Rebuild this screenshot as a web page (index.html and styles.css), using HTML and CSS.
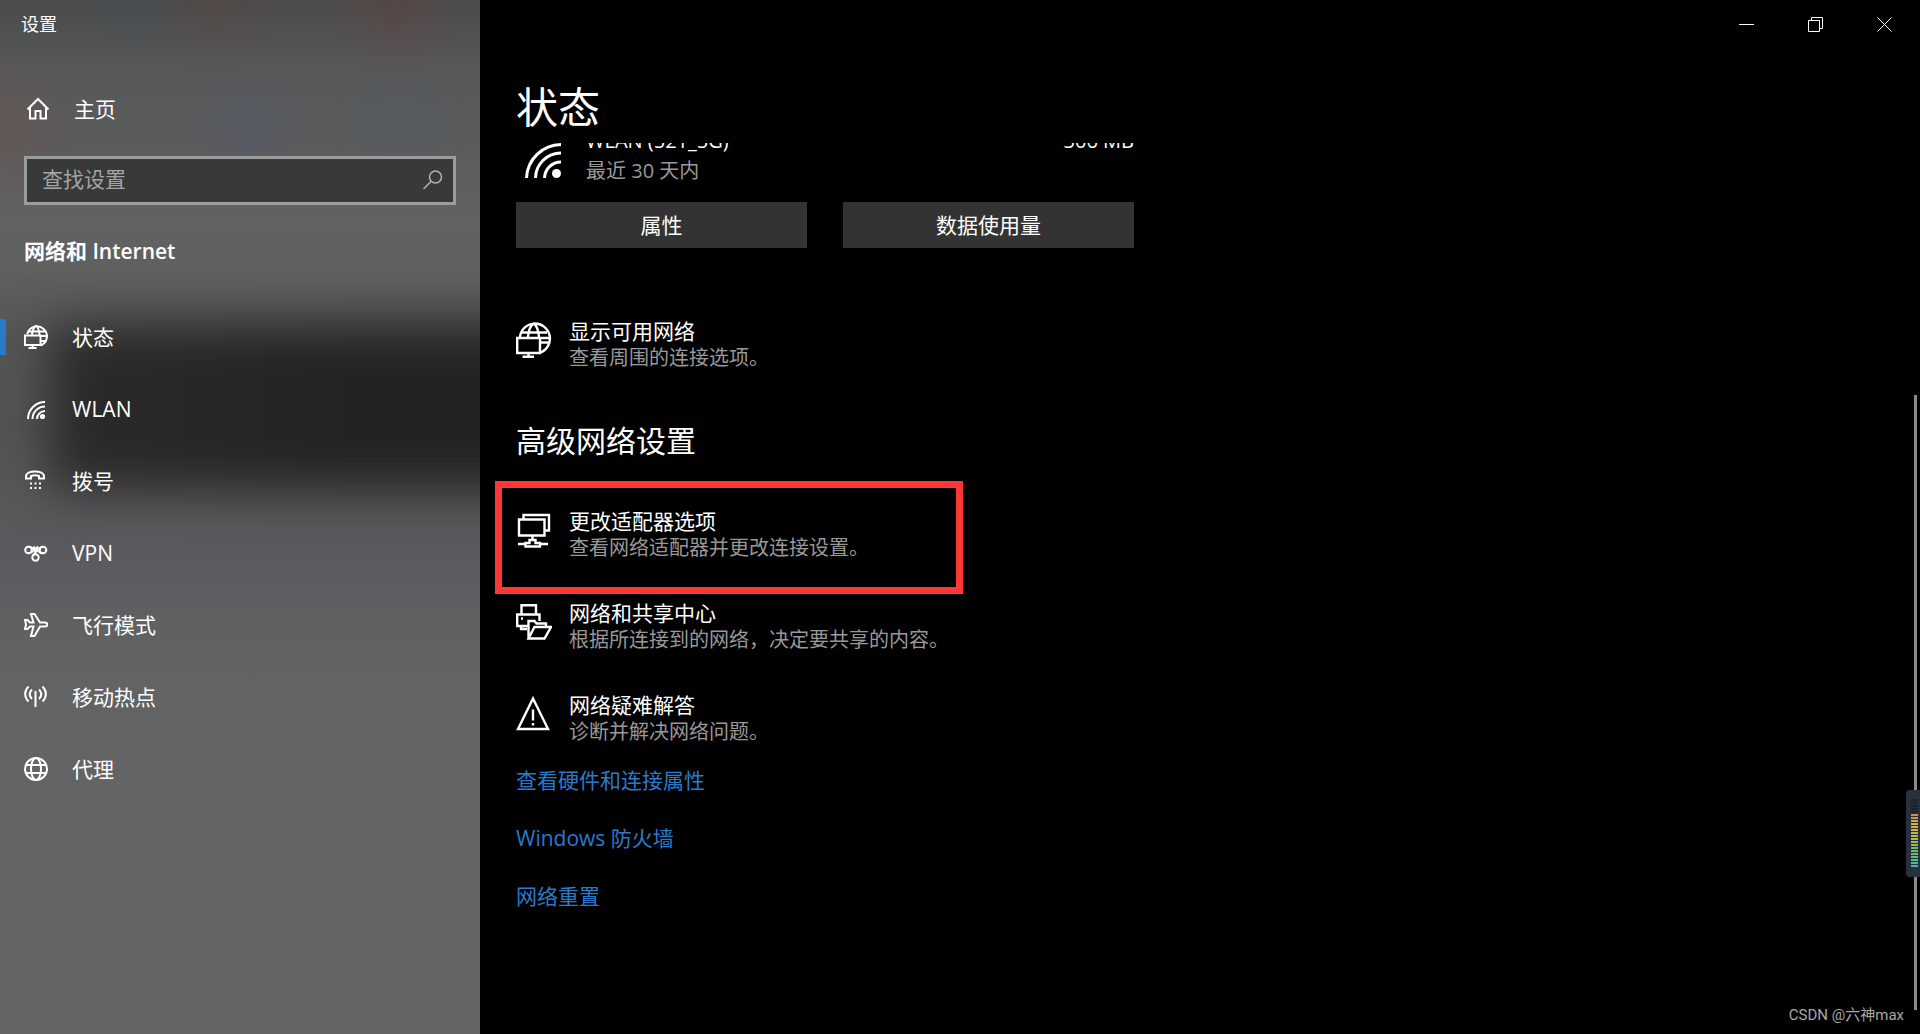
FILE: index.html
```html
<!DOCTYPE html>
<html lang="zh-CN">
<head>
<meta charset="utf-8">
<meta name="viewport" content="width=device-width, initial-scale=1">
<title>设置</title>
<link rel="stylesheet" href="styles.css">
</head>
<body>
<div class="window">
  <aside class="sidebar">
    <div class="app-title">设置</div>
    <a class="home" href="#">
      <svg class="icon" viewBox="0 0 24 24"><path d="M1.5 12.5 12 2l10.500 10.500M4 10.500V21.500H9.500V14H14.500V21.500H20V10.500"/></svg>
      <span>主页</span>
    </a>
    <div class="search">
      <input class="search-input" type="text" placeholder="查找设置" aria-label="查找设置">
      <svg class="icon search-icon" viewBox="0 0 24 24"><circle cx="14.500" cy="8" r="6"/><path d="M10 12.500 2.500 20"/></svg>
    </div>
    <h2 class="category">网络和 Internet</h2>
    <nav class="nav">
      <a class="nav-item current" href="#">
        <svg class="icon" viewBox="0 0 24 24"><path d="M3.200 9A10 10 0 1 1 17 20.500M4.500 6.500H21M17 11H23M17 16H21.500M8 10C8.300 6 9.500 3 11.500 1 14 1 15 5 15.500 10M.9 10.500H16.500V20H.9ZM8.500 20V23M4.500 23H12.500"/></svg>
        <span>状态</span>
      </a>
      <a class="nav-item" href="#">
        <svg class="icon" viewBox="0 0 24 24"><path d="M4 22A17 17 0 0 1 21 5M8.500 22A12.500 12.500 0 0 1 21 9.500M13 22A8 8 0 0 1 21 14"/><circle class="solid" cx="18.500" cy="19.500" r="2.600"/></svg>
        <span>WLAN</span>
      </a>
      <a class="nav-item" href="#">
        <svg class="icon" viewBox="0 0 24 24"><path d="M2 7.500C2 4 6.500 2.500 11 2.500S20 4 20 7.500V9.500H15V7C12.500 6 9.500 6 7 7V9.500H2Z"/><path class="dots" d="M6 14.500H17M6 19H17"/></svg>
        <span>拨号</span>
      </a>
      <a class="nav-item" href="#">
        <svg class="icon" viewBox="0 0 24 24"><circle cx="4.500" cy="9" r="3.300"/><circle cx="19" cy="9" r="3.300"/><circle cx="11.500" cy="16.500" r="3.200"/><path d="M4.500 12.300C8 12.300 9 10 11.500 7.500M19 5.700C14.500 5.700 12.500 10.500 9 14.500M4.500 5.700C8 5.700 9 7.500 11.500 10.500M14 10C15.500 12 17 12.300 19 12.300M9.500 5.500 11.500 8 14 5.500"/></svg>
        <span>VPN</span>
      </a>
      <a class="nav-item" href="#">
        <svg class="icon" viewBox="0 0 24 24"><path d="M1 7H3.500L6 9.500H9.500L7 1H10.500L16 9.500H21C24 9.500 24 13.500 21 13.500H16L10.500 23H7L9.500 13.500H6L3.500 16H1L2 11.500Z"/></svg>
        <span>飞行模式</span>
      </a>
      <a class="nav-item" href="#">
        <svg class="icon" viewBox="0 0 24 24"><path d="M11.500 6V22M4.500 1.500C0 6 0 12 4.500 16.500M8 4.500C5 7.500 5 11 8 14M18.500 1.500C23 6 23 12 18.500 16.500M15 4.500C18 7.500 18 11 15 14"/></svg>
        <span>移动热点</span>
      </a>
      <a class="nav-item" href="#">
        <svg class="icon" viewBox="0 0 24 24"><circle cx="12" cy="12" r="11"/><ellipse cx="12" cy="12" rx="5" ry="11"/><path d="M2 8H22M2 16H22"/></svg>
        <span>代理</span>
      </a>
    </nav>
  </aside>

  <main class="main">
    <div class="caption">
      <button class="caption-button" type="button" aria-label="最小化"><svg viewBox="0 0 15 15"><path d="M0 7.500H15"/></svg></button>
      <button class="caption-button" type="button" aria-label="还原"><svg viewBox="0 0 15 15"><path d="M.5 3.500H11.500V14.500H.5ZM3.500 3.500V.5H14.500V11.500H11.500"/></svg></button>
      <button class="caption-button" type="button" aria-label="关闭"><svg viewBox="0 0 15 15"><path d="M.5.5 14.500 14.500M14.500.5.5 14.500"/></svg></button>
    </div>
    <h1 class="page-title">状态</h1>
    <div class="viewport">
      <div class="content">
        <div class="connection">
          <svg class="signal" viewBox="0 0 38 52"><path d="M2.500 50A35 35 0 0 1 37 16.500M11.500 50A25.500 25.500 0 0 1 37 25M20.500 50A16.500 16.500 0 0 1 37 34"/><circle class="solid" cx="32.500" cy="45.500" r="4.500"/></svg>
          <div class="connection-text">
            <div class="connection-name"><span>WLAN (521_5G)</span><span>306 MB</span></div>
            <div class="connection-note">最近 30 天内</div>
          </div>
        </div>
        <div class="buttons">
          <button class="button" type="button">属性</button>
          <button class="button" type="button">数据使用量</button>
        </div>

        <a class="item item-networks" href="#">
          <svg class="item-icon" viewBox="0 0 36 36"><path d="M4 15A15 15 0 1 1 24.500 30.500M6 10.500H31M24.500 20.500H33M24.500 16H33M12 15C12.500 9 14 4 17.500 1.500 21.500 4 22.500 9 23 15M1.200 16H24V31H1.200ZM12.500 31V35M6.500 34.800H18"/></svg>
          <span class="item-text"><span class="item-title">显示可用网络</span><span class="item-note">查看周围的连接选项。</span></span>
        </a>

        <h2 class="section">高级网络设置</h2>
        <div class="items">
          <a class="item marked" href="#">
            <svg class="item-icon" viewBox="0 0 36 36"><path d="M3 7.500H28.500V23.500H3ZM7.500 7.500V3H33V18.500H28.500M16.500 23.500V28M2 32H9.500M24 32H32M9.500 31H13.500V28H19.500V31H24V34.500H9.500Z"/></svg>
            <span class="item-text"><span class="item-title">更改适配器选项</span><span class="item-note">查看网络适配器并更改连接设置。</span></span>
          </a>
          <a class="item" href="#">
            <svg class="item-icon" viewBox="0 0 36 36"><path d="M5.500 10V1.200H20V10M11.500 22H1.200V10.500H23.500V17M5 21.500V25H11M12.500 34.500V17H18.500L20.500 19.500H30V23M12.500 34.500H28.500L35 23H18.500Z"/><path d="M5 14.500H7"/></svg>
            <span class="item-text"><span class="item-title">网络和共享中心</span><span class="item-note">根据所连接到的网络，决定要共享的内容。</span></span>
          </a>
          <a class="item" href="#">
            <svg class="item-icon" viewBox="0 0 36 36"><path d="M17 2.500 32 33H2ZM17 13.500V24.500M17 27V29.500"/></svg>
            <span class="item-text"><span class="item-title">网络疑难解答</span><span class="item-note">诊断并解决网络问题。</span></span>
          </a>
        </div>
        <div class="links">
          <a class="link" href="#">查看硬件和连接属性</a>
          <a class="link" href="#">Windows 防火墙</a>
          <a class="link" href="#">网络重置</a>
        </div>
      </div>
    </div>
    <div class="scroll-thumb"></div>
    <div class="meter"><div class="meter-idle"></div><div class="meter-level"></div></div>
    <div class="credit">CSDN @六神max</div>
  </main>
</div>
</body>
</html>
```

FILE: styles.css
```css
*,
*::before,
*::after {
  box-sizing: border-box;
}

body {
  margin: 0;
  background: #000;
  color: #fff;
  font-family: "Open Sans", "Noto Sans CJK SC", sans-serif;
  font-size: 21px;
  line-height: 26px;
}

a {
  color: inherit;
  text-decoration: none;
}

h1,
h2 {
  margin: 0;
  font-weight: 400;
}

svg {
  display: block;
  flex: none;
  fill: none;
  stroke: currentColor;
}

.solid {
  fill: currentColor;
  stroke: none;
}

.window {
  display: grid;
  grid-template-columns: 480px 1fr;
  min-height: 100vh;
}

/* Sidebar */

.sidebar {
  position: relative;
  isolation: isolate;
  overflow: hidden;
  background:
    radial-gradient(circle at 395px 10px, rgba(110, 60, 55, 0.3), transparent 70px),
    radial-gradient(circle at 215px 0, rgba(100, 65, 60, 0.25), transparent 80px),
    radial-gradient(circle at 0 130px, rgba(120, 80, 75, 0.3), transparent 80px),
    radial-gradient(circle at 248px 128px, rgba(80, 90, 120, 0.3), transparent 70px),
    radial-gradient(circle at 400px 125px, rgba(75, 95, 110, 0.25), transparent 70px),
    radial-gradient(circle at 135px 0, rgba(65, 80, 90, 0.3), transparent 70px),
    linear-gradient(#4a4b4b 0, #575858 70px, #5b5c5c 150px, #626262 220px, #606060 270px, #555 340px, #525353 430px, #59595b 510px, #5c5b60 570px, #636363 650px, #656565 100%);
}

.sidebar::before {
  content: "";
  position: absolute;
  z-index: -1;
  top: 326px;
  left: 50px;
  right: -80px;
  height: 164px;
  background: linear-gradient(90deg, #2b2b2b, #232323 60%);
  filter: blur(24px);
}

.app-title {
  padding-left: 21px;
  font-size: 18px;
  line-height: 49px;
}

.icon {
  width: 24px;
  height: 24px;
  stroke-width: 2;
}

.home {
  display: flex;
  align-items: center;
  gap: 24px;
  height: 48px;
  margin-top: 36px;
  padding-left: 26px;
}

.search {
  display: flex;
  align-items: center;
  height: 49px;
  margin: 23px 24px 0;
  padding: 0 8px 0 15px;
  border: 3px solid #9b9c9c;
  background: #383939;
}

.search-input {
  flex: 1;
  min-width: 0;
  height: 43px;
  padding: 0 0 4px;
  border: 0;
  outline: 0;
  background: none;
  color: #fff;
  font: inherit;
}

.search-input::placeholder {
  color: #a5a5a5;
  opacity: 1;
}

.search-icon {
  color: #b5b5b5;
  stroke-width: 1.5;
}

.category {
  margin: 32px 24px 36px;
  font-size: 21px;
  font-weight: 600;
  line-height: 28px;
}

.nav-item {
  display: flex;
  align-items: center;
  gap: 24px;
  height: 72px;
  padding-left: 24px;
}

.current {
  background: linear-gradient(#2a7acc, #2a7acc) left center / 6px 36px no-repeat;
}

.dots {
  stroke-dasharray: 2 2.500;
}

/* Main pane */

.main {
  position: relative;
  display: flex;
  flex-direction: column;
  min-width: 0;
}

.caption {
  display: flex;
  justify-content: flex-end;
  padding-right: 1px;
}

.caption-button {
  display: grid;
  place-items: center;
  width: 69px;
  height: 49px;
  padding: 0;
  border: 0;
  background: none;
  color: #fff;
}

.caption-button svg {
  width: 15px;
  height: 15px;
}

.page-title {
  padding: 30px 36px 8px;
  font-size: 42px;
  line-height: 56px;
}

.viewport {
  flex: 1;
  overflow: hidden;
  padding: 0 36px 40px;
}

.content {
  max-width: 618px;
}

.connection {
  display: flex;
  gap: 24px;
  margin-top: -15px;
  padding-left: 8px;
}

.signal {
  width: 38px;
  height: 52px;
  stroke-width: 3;
}

.connection-text {
  flex: 1;
}

.connection-name {
  display: flex;
  justify-content: space-between;
  font-size: 20px;
}

.connection-note,
.item-note {
  color: #999;
  font-size: 20px;
}

.connection-note {
  margin-top: 4px;
}

.buttons {
  display: grid;
  grid-template-columns: 1fr 1fr;
  gap: 36px;
  margin-top: 18px;
}

.button {
  height: 46px;
  padding: 0;
  border: 0;
  background: #333;
  color: #fff;
  font: inherit;
}

.item {
  position: relative;
  display: flex;
  gap: 17px;
}

.item-networks {
  margin-top: 70px;
}

.item-icon {
  width: 36px;
  height: 36px;
  margin-top: 4px;
  stroke-width: 2.400;
}

.item-title,
.item-note {
  display: block;
}

.item-note {
  margin-top: 1px;
}

.section {
  margin: 50px 0 47px;
  font-size: 30px;
  line-height: 40px;
}

.items {
  display: grid;
  gap: 39px;
}

.marked::after {
  content: "";
  position: absolute;
  top: -27px;
  left: -21px;
  width: 468px;
  height: 113px;
  border: 7px solid #fd3636;
}

.links {
  display: flex;
  flex-direction: column;
  align-items: flex-start;
  gap: 32px;
  margin-top: 22px;
}

.link {
  color: #2a7acc;
}

/* Overlays on the right edge */

.scroll-thumb {
  position: absolute;
  top: 395px;
  right: 3px;
  bottom: 24px;
  width: 3px;
  background: #8a8a8a;
}

.meter {
  position: absolute;
  right: 0;
  bottom: 157px;
  width: 14px;
  height: 87px;
  padding: 9px 2px 0 5px;
  border-radius: 4px 0 0 4px;
  background: #2a2f3d;
}

.meter-idle {
  height: 15px;
  background: repeating-linear-gradient(#1c202b 0 2px, #2a2f3d 2px 3px);
}

.meter-level {
  height: 54px;
  background:
    repeating-linear-gradient(transparent 0 2px, #2a2f3d 2px 3px),
    linear-gradient(#d98a3d, #d6b03c 20%, #b3bf45 40%, #7fb860 65%, #2fc0ad);
}

.credit {
  position: absolute;
  right: 16px;
  bottom: 9px;
  color: #a8a8a8;
  font-family: Roboto, "Noto Sans CJK SC", sans-serif;
  font-size: 15px;
  line-height: 20px;
}
```
